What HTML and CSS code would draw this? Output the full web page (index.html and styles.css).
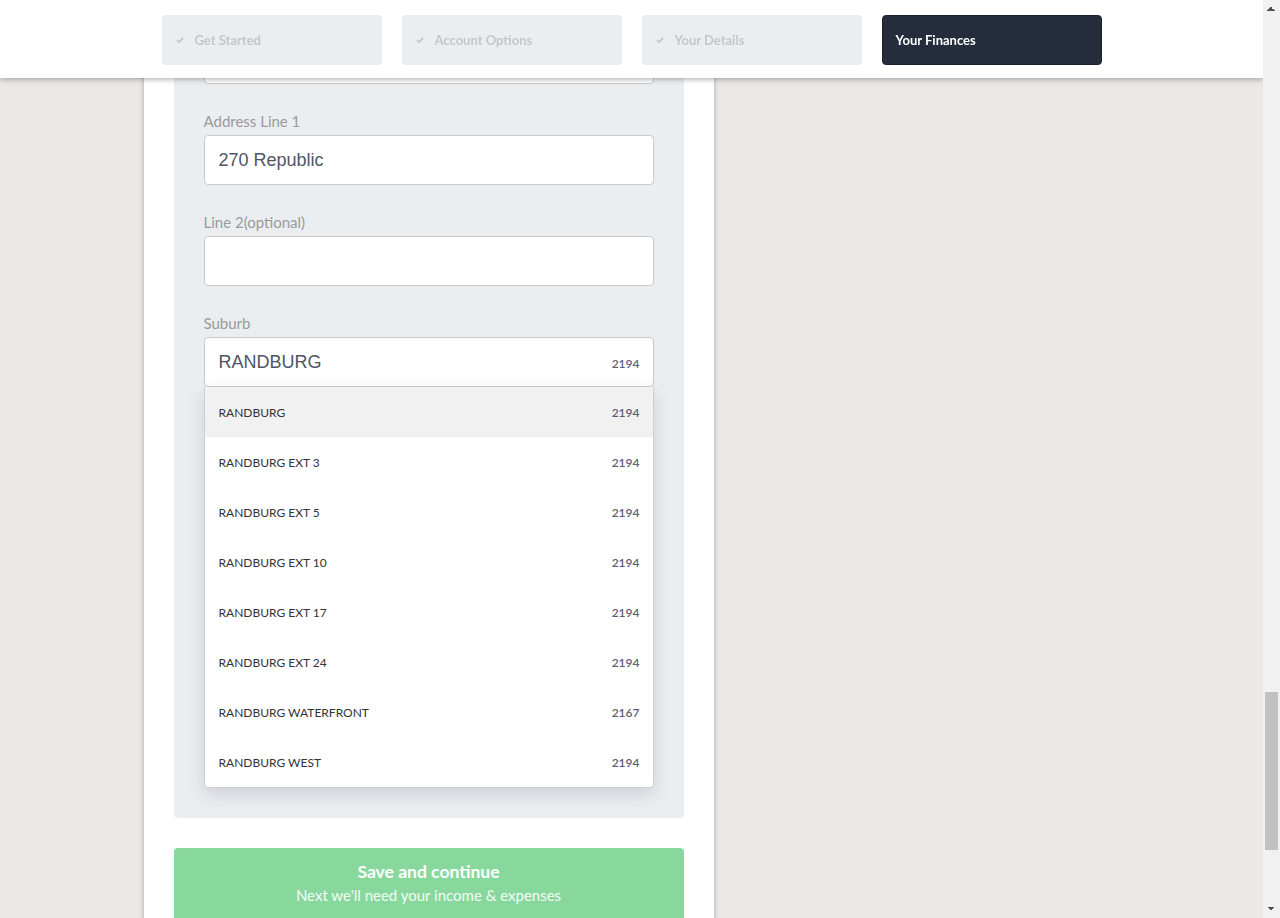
FILE: index.html
```html
<!DOCTYPE html>
<html lang="en">
<head>
<meta charset="utf-8">
<title>Your Finances</title>
<link rel="stylesheet" href="styles.css">
</head>
<body>
<header class="topbar">
  <nav class="steps">
    <div class="step step-done">
      <svg class="tick" viewBox="0 0 8 6" width="8" height="6"><path d="M0.8 3.1 L3 5.2 L7.2 0.9"/></svg>
      <span>Get Started</span>
    </div>
    <div class="step step-done">
      <svg class="tick" viewBox="0 0 8 6" width="8" height="6"><path d="M0.8 3.1 L3 5.2 L7.2 0.9"/></svg>
      <span>Account Options</span>
    </div>
    <div class="step step-done">
      <svg class="tick" viewBox="0 0 8 6" width="8" height="6"><path d="M0.8 3.1 L3 5.2 L7.2 0.9"/></svg>
      <span>Your Details</span>
    </div>
    <div class="step step-active">
      <span>Your Finances</span>
    </div>
  </nav>
</header>

<main class="page">
  <div class="column">
    <form class="card" autocomplete="off">
      <div class="field">
        <label class="field-label">Street Number</label>
        <input class="field-input" type="text" value="">
      </div>
      <div class="field">
        <label class="field-label">Complex or Building (optional)</label>
        <input class="field-input" type="text" value="">
      </div>

      <div class="field" id="address-field">
        <label class="field-label">Address Line 1</label>
        <input class="field-input" type="text" value="270 Republic">
      </div>

      <div class="field">
        <label class="field-label">Line 2(optional)</label>
        <input class="field-input" type="text" value="">
      </div>

      <div class="field field-suburb">
        <label class="field-label">Suburb</label>
        <div class="suburb-box">
          <input class="field-input" type="text" value="RANDBURG">
          <span class="suburb-code">2194</span>
          <ul class="suggestions">
            <li class="suggestion is-active"><span class="sug-name">Randburg</span><span class="sug-code">2194</span></li>
            <li class="suggestion"><span class="sug-name">Randburg Ext 3</span><span class="sug-code">2194</span></li>
            <li class="suggestion"><span class="sug-name">Randburg Ext 5</span><span class="sug-code">2194</span></li>
            <li class="suggestion"><span class="sug-name">Randburg Ext 10</span><span class="sug-code">2194</span></li>
            <li class="suggestion"><span class="sug-name">Randburg Ext 17</span><span class="sug-code">2194</span></li>
            <li class="suggestion"><span class="sug-name">Randburg Ext 24</span><span class="sug-code">2194</span></li>
            <li class="suggestion"><span class="sug-name">Randburg Waterfront</span><span class="sug-code">2167</span></li>
            <li class="suggestion"><span class="sug-name">Randburg West</span><span class="sug-code">2194</span></li>
          </ul>
        </div>
      </div>

      <div class="field">
        <input class="field-input" type="text" placeholder="City" aria-label="City">
      </div>
      <div class="field">
        <input class="field-input" type="text" placeholder="Province" aria-label="Province">
      </div>
      <div class="field">
        <input class="field-input" type="text" placeholder="Postal Code" aria-label="Postal Code">
      </div>
      <div class="field">
        <input class="field-input" type="text" placeholder="Years at address" aria-label="Years at address">
      </div>
      <div class="field field-last">
        <input class="field-input" type="text" placeholder="Months at address" aria-label="Months at address">
      </div>
    </form>

    <button class="save-btn" type="button">
      <span class="save-title">Save and continue</span>
      <span class="save-sub">Next we'll need your income &amp; expenses</span>
    </button>
  </div>
</main>

<footer class="footer">
  <p>All information you provide is encrypted and kept confidential.</p>
</footer>

<div class="scrollbar" aria-hidden="true">
  <div class="sb-btn sb-up"></div>
  <div class="sb-track"><div class="sb-thumb"></div></div>
  <div class="sb-btn sb-down"></div>
</div>

<script src="app.js"></script>
</body>
</html>
```

FILE: styles.css
```css
html {
  scroll-behavior: auto;
}

body {
  margin: 0;
  padding: 78px 17px 0 0;
  background: #ece8e5;
  font-family: "Source Sans Pro", Lato, "Noto Sans", sans-serif;
  color: #333;
}

.topbar {
  position: fixed;
  top: 0;
  left: 0;
  right: 17px;
  height: 78px;
  background: #fff;
  box-shadow: 0 1px 6px rgba(0, 0, 0, 0.35);
  z-index: 10;
}

.steps {
  width: 940px;
  margin: 0 auto;
  padding-top: 15px;
  display: grid;
  grid-template-columns: repeat(4, 1fr);
  gap: 20px;
}

.step {
  height: 50px;
  box-sizing: border-box;
  border-radius: 4px;
  display: flex;
  align-items: center;
  font-size: 13px;
  font-weight: 700;
}

.step-done {
  background: #ebeef1;
  color: #c6c6c6;
  padding-left: 14px;
}

.tick {
  fill: none;
  stroke: #c4c4c4;
  stroke-width: 1.6;
  margin-right: 11px;
}

.step-active {
  background: #252d3d;
  color: #fff;
  padding-left: 13px;
  border: 1px solid #1b2230;
}

.page {
  width: 976px;
  margin: 0 auto;
}

.column {
  width: 570px;
  box-sizing: border-box;
  background: #fff;
  padding: 30px 30px 30px;
  box-shadow: 0 0 5px rgba(0, 0, 0, 0.28);
}

.card {
  display: flow-root;
  background: #ebeef1;
  border-radius: 4px;
  padding: 30px 30px 0;
  margin: 0;
}

.field {
  margin-bottom: 27px;
}

.field-last {
  margin-bottom: 46px;
}

.field-label {
  display: block;
  font-size: 15px;
  line-height: 20px;
  color: #9a9a9a;
  margin-bottom: 4px;
}

.field-input {
  display: block;
  width: 100%;
  height: 50px;
  box-sizing: border-box;
  border: 1px solid #cbcbcb;
  border-radius: 4px;
  background: #fff;
  padding: 0 14px;
  font-family: "Liberation Sans", Arial, sans-serif;
  font-size: 18px;
  color: #4f5566;
  outline: none;
}

.field-input::placeholder {
  color: #b5b5b5;
}

.suburb-box {
  position: relative;
}

.suburb-code {
  position: absolute;
  right: 14px;
  top: 19px;
  font-size: 12px;
  line-height: 16px;
  font-weight: 600;
  color: #5b6178;
}

.suggestions {
  position: absolute;
  left: 0;
  right: 0;
  top: 100%;
  margin: 0;
  padding: 0;
  list-style: none;
  background: #fff;
  border: 1px solid #cfcfcf;
  border-top: 0;
  border-radius: 0 0 4px 4px;
  box-shadow: 0 6px 18px rgba(60, 70, 90, 0.18);
  z-index: 5;
}

.suggestion {
  height: 50px;
  display: flex;
  align-items: center;
  justify-content: space-between;
  padding: 0 13px 0 14px;
  font-size: 12px;
}

.suggestion.is-active {
  background: #f1f1f1;
}

.sug-name {
  text-transform: uppercase;
  color: #333;
}

.sug-code {
  font-weight: 600;
  color: #5b6178;
}

.save-btn {
  display: flex;
  flex-direction: column;
  align-items: center;
  width: 100%;
  margin-top: 30px;
  padding: 12px 0 16px;
  border: 0;
  border-radius: 4px;
  background: #88d89d;
  color: #fff;
  font-family: inherit;
  cursor: pointer;
}

.save-title {
  font-size: 17.5px;
  line-height: 24px;
  font-weight: 700;
}

.save-sub {
  font-size: 15px;
  line-height: 22px;
  color: #f2fbf4;
}

.footer {
  padding: 110px 0 112px;
  text-align: center;
  font-size: 13px;
  color: #a29d98;
}

.footer p {
  margin: 0;
  line-height: 20px;
}

/* window scrollbar, drawn to match the captured browser chrome */
.scrollbar {
  position: fixed;
  top: 0;
  right: 0;
  bottom: 0;
  width: 17px;
  background: #f1f1f1;
  display: flex;
  flex-direction: column;
  z-index: 20;
}

.sb-btn {
  height: 17px;
  flex: none;
  background-repeat: no-repeat;
  background-size: 4px 4px;
}

.sb-up {
  background-image:
    linear-gradient(to top left, #505050 50%, transparent 50%),
    linear-gradient(to top right, #505050 50%, transparent 50%);
  background-position: 4px 7px, 8px 7px;
}

.sb-down {
  background-image:
    linear-gradient(to bottom left, #505050 50%, transparent 50%),
    linear-gradient(to bottom right, #505050 50%, transparent 50%);
  background-position: 4px 6px, 8px 6px;
}

.sb-track {
  flex: 1;
  padding-top: 675px;
  box-sizing: border-box;
}

.sb-thumb {
  height: 158px;
  margin: 0 2px;
  background: #c1c1c1;
}
```

FILE: app.js
```js
(function () {
  var anchor = document.getElementById("address-field");
  var y = anchor.getBoundingClientRect().top + window.pageYOffset - 111;
  window.scrollTo(0, y);
})();
```
